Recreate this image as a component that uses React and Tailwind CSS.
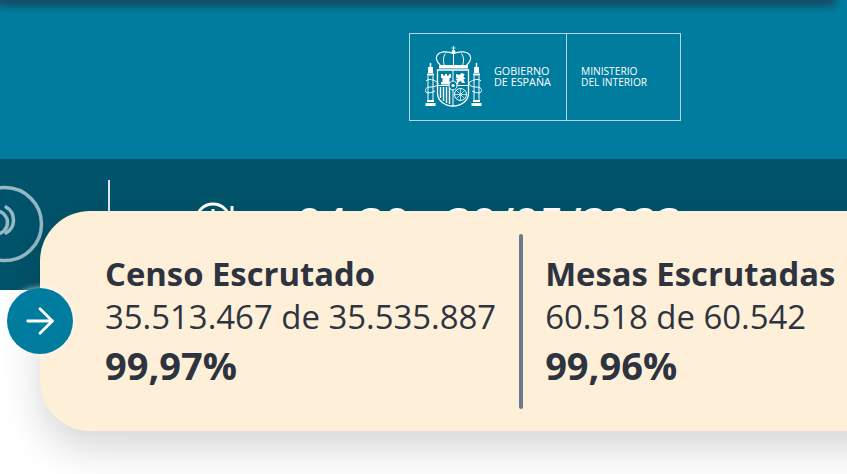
import { ArrowRight } from "lucide-react"

const CoatOfArms = () => (
    <svg width="57" height="62" viewBox="0 0 57 62" fill="none" stroke="white" strokeWidth="1">
        {/* crown */}
        <path d="M28.500 0v4M26.500 2h4" />
        <circle cx="28.500" cy="6" r="2" fill="white" stroke="none" />
        <path d="M28.500 7.500c-6-2.500-14-2.500-16.500 2-1.800 3.500.5 7 3.500 10h26c3-3 5.300-6.500 3.500-10-2.500-4.500-10.500-4.500-16.500-2z" strokeWidth="1.200" />
        <path d="M20.500 7.500c-2.500 3.500-2.500 8-1 12M36.500 7.500c2.500 3.500 2.500 8 1 12M28.500 8v11.500" />
        <path d="M14 19.500h29v3H14z" fill="white" stroke="none" />
        {/* shield */}
        <path d="M12.500 24h31v23c0 8-7.500 13-15.500 13s-15.500-5-15.500-13z" strokeWidth="1.300" />
        <path d="M28 24v15M12.500 39.500h31M28 40v20" />
        <path d="M16 28h2v1.500h2V28h2v1.500h2V28h2v4h-1.500v4H26v2.500H16V36h1.500v-4H16z" fill="white" stroke="none" />
        <path d="M31 28l3.500 1 2-2 3 1-1 3 2 1.500-2 1 1.500 3.500h-3l-1-2-2.500 1-.5 2.500H31l1-4-1.500-1.500 2.500-.5-2-1z" fill="white" stroke="none" />
        <path d="M15.500 41v11M18.500 41v14M21.500 41v16M24.500 41v17" strokeWidth="1.400" />
        <circle cx="35.500" cy="48.500" r="6" />
        <path d="M35.500 42.500v12M29.500 48.500h12M31.300 44.300l8.400 8.400M39.700 44.300l-8.400 8.400" strokeWidth=".7" />
        <ellipse cx="28" cy="39.500" rx="4" ry="4.500" fill="#007d9e" />
        <circle cx="28" cy="39.500" r="1.500" fill="white" stroke="none" />
        {/* pillars */}
        <path d="M5.500 17v4M51.500 17v4" strokeWidth="1.500" />
        <path d="M3 21h5v6H3zM49 21h5v6h-5z" fill="white" stroke="none" />
        <path d="M2 27.500h7v2H2zM48 27.500h7v2h-7z" fill="white" stroke="none" />
        <path d="M3 30v24M8 30v24M49 30v24M54 30v24" />
        <path d="M1 35c3-3 8-1 11 1s-1 5-6 5-7 3-5 5 7 0 9-1M56 35c-3-3-8-1-11 1s1 5 6 5 7 3 5 5-7 0-9-1" />
        <path d="M2 54h7v2H2zM48 54h7v2h-7zM0.500 57h10v3H.5zM46.500 57h10v3h-10z" fill="white" stroke="none" />
    </svg>
)

const Stat = ({ title, detail, percent }) => (
    <div className="flex flex-col pt-[6px] pb-[4px] text-[#2e3340]">
        <span className="text-[32.800px] leading-[42px] font-bold whitespace-nowrap">{title}</span>
        <span className="text-[32.900px] leading-[44px] whitespace-nowrap">{detail}</span>
        <span className="text-[38px] leading-[52px] font-bold">{percent}</span>
    </div>
)

const App = () => {
    return (
        <div className="relative h-[474px] w-[847px] overflow-hidden bg-white font-['Open_Sans',sans-serif]">
            <div className="h-[159px] bg-[#007d9e] pt-[33px] pl-[409px]">
                <div className="absolute -top-[2px] left-0 h-[2px] w-[832px] shadow-[0_2px_8px_3px_rgba(30,45,60,0.85)]" />
                <div className="flex h-[88px] w-[272px] border border-[#b4d6e0] text-white">
                    <div className="flex w-[157px] items-center border-r border-[#b4d6e0] pl-[15px]">
                        <CoatOfArms />
                        <div className="ml-[12px] mb-[2px] text-[10.800px] leading-[11px] whitespace-nowrap">
                            <div>GOBIERNO</div>
                            <div>DE ESPAÑA</div>
                        </div>
                    </div>
                    <div className="flex items-center pl-[14px] text-[10.200px] leading-[11px] whitespace-nowrap">
                        <div>
                            <div>MINISTERIO</div>
                            <div>DEL INTERIOR</div>
                        </div>
                    </div>
                </div>
            </div>

            <div className="flex h-[131px] bg-[#00536a] text-white">
                <div className="relative w-[108px] shrink-0">
                    <svg className="absolute -left-[40px] top-[21px]" width="88" height="88" viewBox="0 0 88 88" fill="none" stroke="#94b9c5" strokeWidth="3.500" strokeLinecap="round">
                        <circle cx="45" cy="44" r="36.500" />
                        <path d="M46 27A15 15 0 0 1 46 53" />
                        <path d="M36 31A11.400 11.400 0 0 1 36 54" />
                    </svg>
                </div>
                <div className="mt-[21px] h-[60px] w-[2px] shrink-0 bg-[#dfeaee]" />
                <div className="ml-[85px] mt-[42px] flex items-start">
                    <svg width="40" height="40" viewBox="0 0 40 40" fill="none" stroke="white" strokeWidth="3">
                        <circle cx="18" cy="20" r="17" />
                        <path d="M18 8v12l8 5" />
                        <path d="M37 5v9" />
                    </svg>
                    <span className="ml-[62px] -mt-[7px] text-[44px] font-semibold leading-[56px] whitespace-nowrap">04:30 - 30/05/2023</span>
                </div>
            </div>

            <div className="relative z-10 -mt-[79px] ml-[40px] flex h-[220px] w-[900px] items-center rounded-[50px] bg-[#feefd8] pl-[65px] shadow-[0_18px_40px_rgba(0,0,0,0.16)]">
                <button className="absolute -left-[33px] top-[77px] flex size-[66px] items-center justify-center rounded-full bg-[#007d9e] text-white shadow-[0_0_6px_rgba(255,255,255,0.8)]">
                    <ArrowRight size={42} strokeWidth={1.600} />
                </button>
                <Stat title="Censo Escrutado" detail="35.513.467 de 35.535.887" percent="99,97%" />
                <div className="ml-[23px] mr-[22px] h-[175px] w-[4px] shrink-0 rounded-full bg-[#6a7a8e]" />
                <Stat title="Mesas Escrutadas" detail="60.518 de 60.542" percent="99,96%" />
            </div>
        </div>
    )
}

export default App
